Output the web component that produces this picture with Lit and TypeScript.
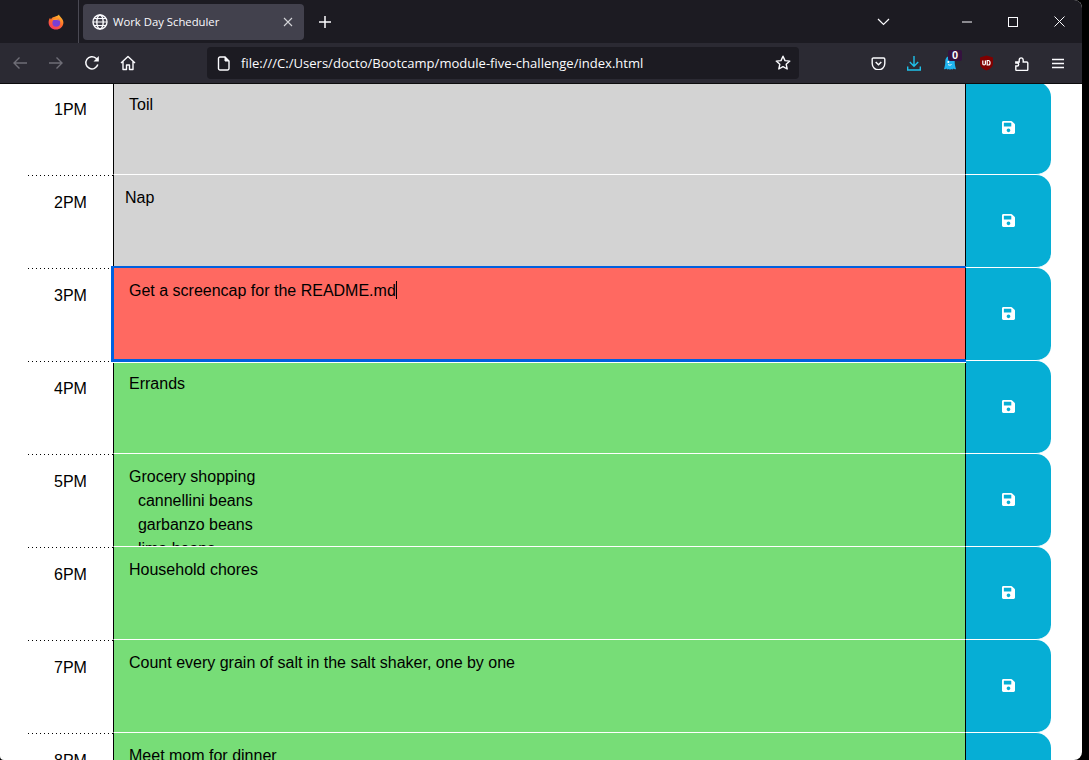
import { LitElement, html, css, svg } from "lit";
import { customElement } from "lit/decorators.js";

const rows = [
  { hour: "1PM", state: "past", text: "Toil" },
  { hour: "2PM", state: "past nudged", text: "Nap" },
  { hour: "3PM", state: "present focused", text: "Get a screencap for the README.md", caret: true },
  { hour: "4PM", state: "future", text: "Errands" },
  { hour: "5PM", state: "future", text: "Grocery shopping\n  cannellini beans\n  garbanzo beans\n  lima beans" },
  { hour: "6PM", state: "future", text: "Household chores" },
  { hour: "7PM", state: "future", text: "Count every grain of salt in the salt shaker, one by one" },
  { hour: "8PM", state: "future", text: "Meet mom for dinner" },
];

const icon = (w: number, h: number, body: unknown, vb = `0 0 ${w} ${h}`) =>
  html`<svg width=${w} height=${h} viewBox=${vb} fill="none" stroke="currentColor" stroke-width="1.4">${body}</svg>`;

const firefox = html`<svg width="16" height="16" viewBox="0 0 16 16">
  <defs>
    <linearGradient id="fx" x1="0.7" y1="0" x2="0.2" y2="1">
      <stop offset="0" stop-color="#ffbd2e" />
      <stop offset="0.5" stop-color="#ff6a2b" />
      <stop offset="1" stop-color="#f4306a" />
    </linearGradient>
  </defs>
  <path fill="url(#fx)" d="M11 .6c.2 1.200.9 1.700 2 2.800 1.600 1.500 2.400 3.300 2.400 5 0 4-3.300 7.100-7.400 7.100S.6 12.300.6 8.400c0-1.800.6-3.400 1.500-4.700.1.800.4 1.300.9 1.700.5-1.300 1.700-2.100 3-2.400C7.800 2.600 9.800 2 11 .6z" />
  <circle cx="8.300" cy="8.800" r="3.900" fill="#7a3fd6" />
  <path fill="#ff9a2b" d="M4.300 5.300c2-1 5.300-1.100 7.600 1.400-1.300-.8-2.800-.9-4-.7-1.200.2-2.500.2-3.600-.7z" />
</svg>`;

const ghostery = html`<svg width="14" height="16" viewBox="0 0 14 16">
  <path fill="#1fb4f0" d="M7 1c3 0 4.700 2.400 4.700 5.500 0 3 .6 5.300 1.300 7.500-.9.600-1.700.2-2.400-.5-.6.800-1.500 1.300-2.400.4-.5.800-1.800.8-2.400 0-.9.900-1.800.4-2.400-.4-.7.700-1.500 1.100-2.400.5.700-2.200 1.300-4.500 1.300-7.500C2.300 3.400 4 1 7 1z" />
  <circle cx="5.300" cy="7" r="1" fill="#fff" />
  <path d="M5 9.500c1 .8 2.500.8 3.500 0" stroke="#fff" fill="none" />
</svg>`;

@customElement("app-root")
export class AppRoot extends LitElement {
  static styles = css`
    :host {
      display: block;
      width: 1089px;
      height: 760px;
      background: #000;
      overflow: hidden;
      font-family: "Liberation Sans", Arial, sans-serif;
    }

    .window {
      width: 1082px;
      height: 760px;
      display: flex;
      flex-direction: column;
      background: #fff;
      border-radius: 0 8px 8px 4px;
      overflow: hidden;
    }

    .tabbar {
      height: 43px;
      flex: none;
      display: flex;
      align-items: center;
      background: #1c1b22;
      color: #fbfbfe;
    }

    .logo-slot {
      width: 79px;
      height: 43px;
      box-sizing: border-box;
      padding-left: 48px;
      display: flex;
      align-items: center;
      border-right: 1px solid #4a4953;
    }

    .tab {
      margin-left: 4px;
      width: 221px;
      height: 36px;
      box-sizing: border-box;
      padding: 0 9px;
      display: flex;
      align-items: center;
      gap: 5px;
      background: #42414d;
      border-radius: 4px;
      font-family: "Open Sans", sans-serif;
      font-size: 11.3px;
    }

    .tab span {
      flex: 1;
    }

    .tab-x {
      display: flex;
      color: #d4d4d8;
      margin-right: 2px;
    }

    .new-tab {
      display: flex;
      margin-left: 14px;
    }

    .spacer {
      flex: 1;
    }

    .caption {
      display: flex;
      align-items: center;
    }

    .chevron {
      margin-right: 54px;
      display: flex;
    }

    .caption-btn {
      width: 46px;
      display: flex;
      justify-content: center;
    }

    .navbar {
      height: 40px;
      flex: none;
      display: flex;
      align-items: center;
      background: #2b2a33;
      border-bottom: 1px solid #0c0c0d;
      color: #fbfbfe;
    }

    .nav-group {
      width: 207px;
      padding-left: 12px;
      box-sizing: border-box;
      display: flex;
      align-items: center;
      gap: 20px;
    }

    .nav-group div {
      display: flex;
    }

    .dim {
      color: #6f6e77;
    }

    .urlbar {
      width: 592px;
      height: 32px;
      box-sizing: border-box;
      padding: 0 8px 0 10px;
      display: flex;
      align-items: center;
      gap: 11px;
      background: #1c1b22;
      border-radius: 4px;
      font-family: "Open Sans", sans-serif;
      font-size: 13.06px;
    }

    .urlbar span {
      flex: 1;
    }

    .tools {
      margin-left: 61px;
      display: flex;
      align-items: center;
    }

    .tool {
      position: relative;
      width: 36px;
      display: flex;
      justify-content: center;
    }

    .badge {
      position: absolute;
      top: -5px;
      left: 16px;
      width: 14px;
      height: 11px;
      border-radius: 2px;
      background: #35123f;
      color: #fff;
      font-size: 11px;
      font-weight: 700;
      line-height: 11px;
      text-align: center;
    }

    .page {
      flex: 1;
      min-height: 0;
      overflow: hidden;
    }

    .planner {
      margin: -2px 0 0 28px;
      width: 1023px;
    }

    .row {
      height: 93px;
      display: grid;
      grid-template-columns: 85px 853px 85px;
    }

    .hour {
      height: 94px;
      box-sizing: border-box;
      padding-top: 18px;
      background: linear-gradient(to right, #000 1px, transparent 1px) left bottom / 4px 1px repeat-x;
      text-align: center;
      font-size: 16px;
      line-height: 20px;
    }

    .task {
      height: 93px;
      box-sizing: border-box;
      padding: 11px 15px;
      border-left: 1px solid #000;
      border-right: 1px solid #000;
      border-bottom: 1px solid #fff;
      font-size: 16px;
      line-height: 24px;
      color: #000;
      white-space: pre;
      overflow: hidden;
    }

    .past {
      background: #d3d3d3;
    }

    .present {
      background: #ff6961;
    }

    .future {
      background: #77dd77;
    }

    .nudged {
      padding-left: 11px;
    }

    .focused {
      position: relative;
      z-index: 1;
      height: 92px;
      border-left-color: #0060df;
      border-bottom-color: #0060df;
      outline: 2px solid #0060df;
      outline-offset: 0;
      box-shadow: 0 3px 0 0 #fff;
    }

    .caret {
      display: inline-block;
      width: 1px;
      height: 18px;
      margin-bottom: -3px;
      background: #000;
    }

    .save {
      position: relative;
      z-index: 2;
      height: 93px;
      box-sizing: border-box;
      padding: 0 1px 1px 0;
      display: flex;
      align-items: center;
      justify-content: center;
      background: #06aed5;
      border-bottom: 1px solid #fff;
      border-radius: 0 15px 15px 0;
      color: #fff;
    }
  `;

  private saveIcon() {
    return html`<svg width="13" height="13" viewBox="0 32 448 448" fill="#fff">
      <path d="M433.900 129.900l-83.900-83.900A48 48 0 0 0 316.100 32H48C21.500 32 0 53.500 0 80v352c0 26.500 21.500 48 48 48h352c26.500 0 48-21.500 48-48V163.900a48 48 0 0 0-14.100-34zM224 416c-35.300 0-64-28.700-64-64 0-35.300 28.700-64 64-64s64 28.700 64 64c0 35.300-28.700 64-64 64zm96-304.500V212c0 6.600-5.400 12-12 12H76c-6.600 0-12-5.400-12-12V108c0-6.600 5.400-12 12-12h228.500c3.200 0 6.200 1.300 8.500 3.500l3.500 3.500c2.200 2.200 3.500 5.300 3.500 8.500z" />
    </svg>`;
  }

  render() {
    return html`
      <div class="window">
        <div class="tabbar">
          <div class="logo-slot">${firefox}</div>
          <div class="tab">
            ${icon(16, 16, svg`<circle cx="8" cy="8" r="7"/><ellipse cx="8" cy="8" rx="3.200" ry="7"/><path d="M1 8h14M2 4.500h12M2 11.500h12" stroke-width="1.100"/>`)}
            <span>Work Day Scheduler</span>
            <div class="tab-x">${icon(10, 10, svg`<path d="M1 1l8 8M9 1l-8 8" stroke-width="1.100"/>`)}</div>
          </div>
          <div class="new-tab">${icon(14, 14, svg`<path d="M7 1v12M1 7h12" stroke-width="1.500"/>`)}</div>
          <div class="spacer"></div>
          <div class="caption">
            <div class="chevron">${icon(13, 8, svg`<path d="M1 1l5.500 5.500L12 1" stroke-width="1.200"/>`)}</div>
            <div class="caption-btn">${icon(10, 2, svg`<path d="M0 1h10" stroke-width="1"/>`)}</div>
            <div class="caption-btn">${icon(10, 10, svg`<rect x=".5" y=".5" width="9" height="9" stroke-width="1"/>`)}</div>
            <div class="caption-btn">${icon(11, 11, svg`<path d="M.5.500l10 10M10.500.500l-10 10" stroke-width="1"/>`)}</div>
          </div>
        </div>
        <div class="navbar">
          <div class="nav-group">
            <div class="dim">${icon(16, 14, svg`<path d="M15 7H2M7.500 1.500L2 7l5.500 5.500"/>`)}</div>
            <div class="dim">${icon(16, 14, svg`<path d="M1 7h13M8.500 1.500L14 7l-5.500 5.500"/>`)}</div>
            <div>${icon(16, 16, svg`<path d="M13.800 9.500A6.100 6.100 0 1 1 12 3.200L14 5" stroke-width="1.500"/><path d="M14.800 1v5.500H9.500z" fill="currentColor" stroke="none"/>`)}</div>
            <div>${icon(16, 16, svg`<path d="M1 8l7-6.500L15 8M3 6.500V14.500h3.500V10h3v4.500H13V6.500" stroke-linejoin="round"/>`)}</div>
          </div>
          <div class="urlbar">
            ${icon(13, 15, svg`<path d="M1.500 2.500a1.500 1.500 0 0 1 1.500-1.500h5l4 4v7.500a1.500 1.500 0 0 1-1.500 1.500H3a1.500 1.500 0 0 1-1.500-1.500z"/><path d="M8 1v4h4" fill="currentColor" stroke-width="1"/>`)}
            <span>file:///C:/Users/docto/Bootcamp/module-five-challenge/index.html</span>
            ${icon(16, 16, svg`<path d="M8 1.200l2 4.400 4.800.5-3.600 3.200 1 4.700L8 11.600l-4.200 2.400 1-4.700L1.200 6.100 6 5.600z" stroke-linejoin="round"/>`)}
          </div>
          <div class="tools">
            <div class="tool">${icon(15, 13, svg`<path d="M1.900 1h10.200a1.200 1.200 0 0 1 1.200 1.200v4.300a6.300 6.300 0 0 1-12.600 0V2.200A1.200 1.200 0 0 1 1.900 1z"/><path d="M4.200 5l2.800 2.700L9.800 5" stroke-width="1.500"/>`, "0 0 14 13")}</div>
            <div class="tool" style="color:#1fc1ea">${icon(14, 15, svg`<path d="M7 0v10M2.800 6L7 10.200 11.200 6M.7 10.500v3.500h12.600v-3.500" />`)}</div>
            <div class="tool">${ghostery}<span class="badge">0</span></div>
            <div class="tool">
              <svg width="15" height="16" viewBox="0 0 14 16">
                <path fill="#800000" d="M7 .5l6.500 2v6c0 3.500-3.500 6-6.500 7-3-1-6.500-3.500-6.500-7v-6z" />
                <path fill="none" stroke="#fff" stroke-width="1.200" d="M3.300 5.500v3.200c0 1.600 2.600 1.600 2.600 0V5.500M7.700 5.500v4.500h1.200c2.200 0 2.200-4.500 0-4.500z" />
              </svg>
            </div>
            <div class="tool">${icon(14, 16, svg`<path d="M.8 7h3.400V5.300c0-3.300 4-3.300 4 0V7h3.500c.6 0 1.100.5 1.100 1.100V14.400c0 .6-.5 1.100-1.100 1.100H1.600c-.5 0-.8-.4-.8-.9v-3.600h1.500c1.800 0 1.800-3 0-3H.8z"/>`)}</div>
            <div class="tool">${icon(14, 11, svg`<path d="M1 1.500h12M1 5.500h12M1 9.500h12" stroke-width="1.300"/>`)}</div>
          </div>
        </div>
        <div class="page">
          <div class="planner">
            ${rows.map(
              (row) => html`
                <div class="row">
                  <div class="hour">${row.hour}</div>
                  <div class="task ${row.state}">${row.text}${row.caret ? html`<span class="caret"></span>` : ""}</div>
                  <div class="save">${this.saveIcon()}</div>
                </div>
              `
            )}
          </div>
        </div>
      </div>
    `;
  }
}
